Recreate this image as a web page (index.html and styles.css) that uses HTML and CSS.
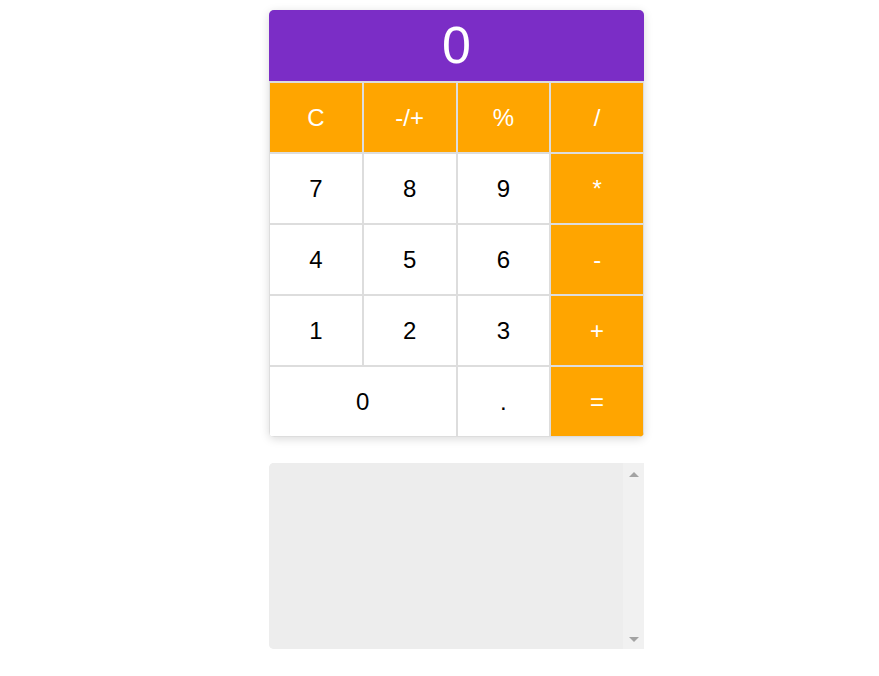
FILE: index.html
```html
<!DOCTYPE html>
<html>
<head>
<meta charset="utf-8">
<link rel="stylesheet" href="styles.css">
</head>
<body>
<div class="app">
  <div class="calculator">
    <div class="display">0</div>
    <div class="keys">
      <button class="key op">C</button>
      <button class="key op">-/+</button>
      <button class="key op">%</button>
      <button class="key op">/</button>
      <button class="key">7</button>
      <button class="key">8</button>
      <button class="key">9</button>
      <button class="key op">*</button>
      <button class="key">4</button>
      <button class="key">5</button>
      <button class="key">6</button>
      <button class="key op">-</button>
      <button class="key">1</button>
      <button class="key">2</button>
      <button class="key">3</button>
      <button class="key op">+</button>
      <button class="key wide">0</button>
      <button class="key">.</button>
      <button class="key op">=</button>
    </div>
  </div>
  <div class="history">
    <textarea class="history-input"></textarea>
    <div class="scrollbar">
      <span class="arrow up"></span>
      <span class="arrow down"></span>
    </div>
  </div>
</div>
</body>
</html>
```
FILE: styles.css
```css
html, body {
  margin: 0;
  padding: 0;
  background: #fff;
}
body {
  font-family: "Liberation Sans", Arial, sans-serif;
}
.app {
  width: 375px;
  margin: 10px 0 0 269px;
  display: flex;
  flex-direction: column;
}
.calculator {
  border-radius: 5px;
  overflow: hidden;
  box-shadow: 0 2px 10px rgba(0, 0, 0, 0.15);
  background: #ddd;
}
.display {
  height: 71px;
  border-bottom: 1px solid #dddddd;
  background: #7b2dc6;
  color: #fff;
  font-size: 52px;
  line-height: 71px;
  text-align: center;
  overflow: hidden;
}
.keys {
  display: grid;
  grid-template-columns: repeat(4, 1fr);
  grid-auto-rows: 71px;
}
.key {
  margin: 0;
  border: 1px solid #dddddd;
  background: #fff;
  color: #000;
  font-family: "Liberation Sans", Arial, sans-serif;
  font-size: 24px;
  padding: 0;
  outline: none;
}
.key.op {
  background: #ffa500;
  color: #fff;
}
.key.wide {
  grid-column: span 2;
}
.history {
  margin-top: 26px;
  height: 186px;
  display: flex;
  border-radius: 5px 0 0 5px;
  overflow: hidden;
  background: #ededed;
}
.history-input {
  flex: 1;
  min-width: 0;
  margin: 0;
  padding: 0;
  border: none;
  background: #ededed;
  resize: none;
  outline: none;
  overflow: hidden;
}
.scrollbar {
  width: 21px;
  flex: none;
  background: #f1f1f1;
  display: flex;
  flex-direction: column;
  justify-content: space-between;
  align-items: center;
  padding: 9px 0 7px;
  box-sizing: border-box;
}
.arrow {
  width: 0;
  height: 0;
  border-left: 5px solid transparent;
  border-right: 5px solid transparent;
}
.arrow.up {
  border-bottom: 5px solid #a3a3a3;
}
.arrow.down {
  border-top: 5px solid #a3a3a3;
}
```
